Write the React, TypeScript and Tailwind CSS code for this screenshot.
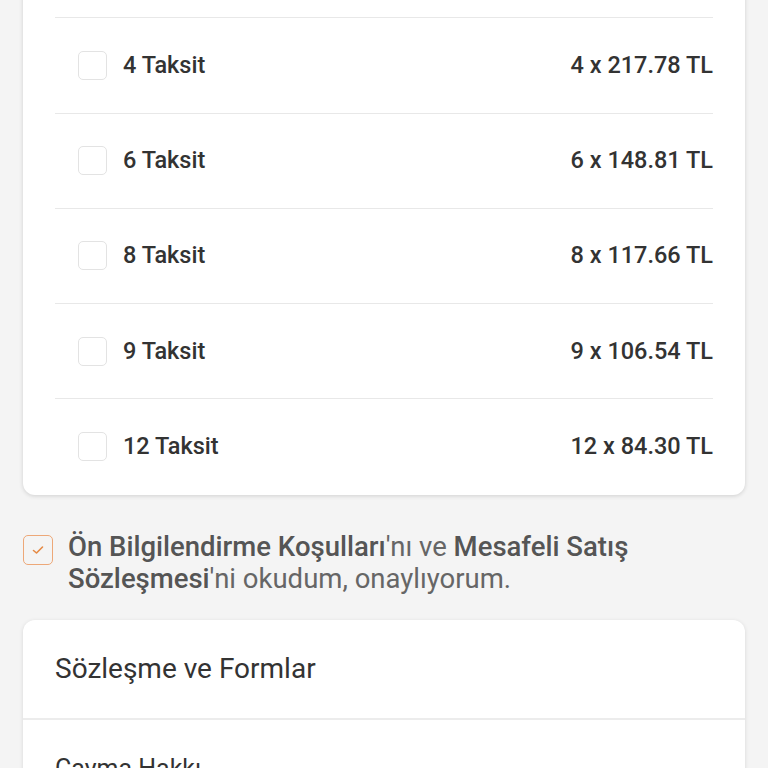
import React from 'react';

const installments = [
  { count: 3, amount: '287.61' },
  { count: 4, amount: '217.78' },
  { count: 6, amount: '148.81' },
  { count: 8, amount: '117.66' },
  { count: 9, amount: '106.54' },
  { count: 12, amount: '84.30' },
];

function InstallmentRow({ count, amount, last }: { count: number; amount: string; last: boolean }) {
  return (
    <div className={`mx-8 h-[95.25px] flex items-center ${last ? '' : 'border-b border-[#e8e8e8]'}`}>
      <div className="ml-[23px] w-[29px] h-[29px] rounded-[5px] border border-[#e3e3e3] bg-white" />
      <span className="ml-4 text-[23.5px] font-medium text-[#333]">{count} Taksit</span>
      <span className="ml-auto text-[23.5px] font-medium text-[#333]">
        {count} x {amount} TL
      </span>
    </div>
  );
}

function App() {
  return (
    <div className="h-[768px] overflow-hidden bg-[#f4f4f4] font-['Roboto',sans-serif]">
      <div className="mx-[23px] -mt-[77px] bg-white rounded-b-[12px] shadow-[0_1px_4px_rgba(0,0,0,0.15)]">
        {installments.map((it, i) => (
          <InstallmentRow key={it.count} count={it.count} amount={it.amount} last={i === installments.length - 1} />
        ))}
      </div>

      <div className="mx-[23px] mt-[36px] flex items-start">
        <div className="mt-[4px] w-[30px] h-[30px] shrink-0 rounded-[5px] border border-[#eda878] flex items-center justify-center">
          <svg width="14" height="14" viewBox="0 0 14 14" fill="none">
            <path d="M2.5 7.5 L5.5 10 L11.5 4" stroke="#e58a45" strokeWidth="1.6" strokeLinecap="round" strokeLinejoin="round" />
          </svg>
        </div>
        <p className="ml-[15px] text-[27.5px] leading-[32px] text-[#666]">
          <span className="font-medium text-[#555]">Ön Bilgilendirme Koşulları</span>'nı ve{' '}
          <span className="font-medium text-[#555]">Mesafeli Satış Sözleşmesi</span>'ni okudum, onaylıyorum.
        </p>
      </div>

      <div className="mx-[23px] mt-[25px] bg-white rounded-[12px] shadow-[0_1px_4px_rgba(0,0,0,0.12)]">
        <div className="h-[100px] px-8 flex items-center border-b-2 border-[#ececec]">
          <span className="text-[28px] text-[#333]">Sözleşme ve Formlar</span>
        </div>
        <div className="px-8 pt-[30px] pb-8">
          <span className="text-[25px] text-[#333]">Cayma Hakkı</span>
        </div>
      </div>
    </div>
  );
}

export default App;
